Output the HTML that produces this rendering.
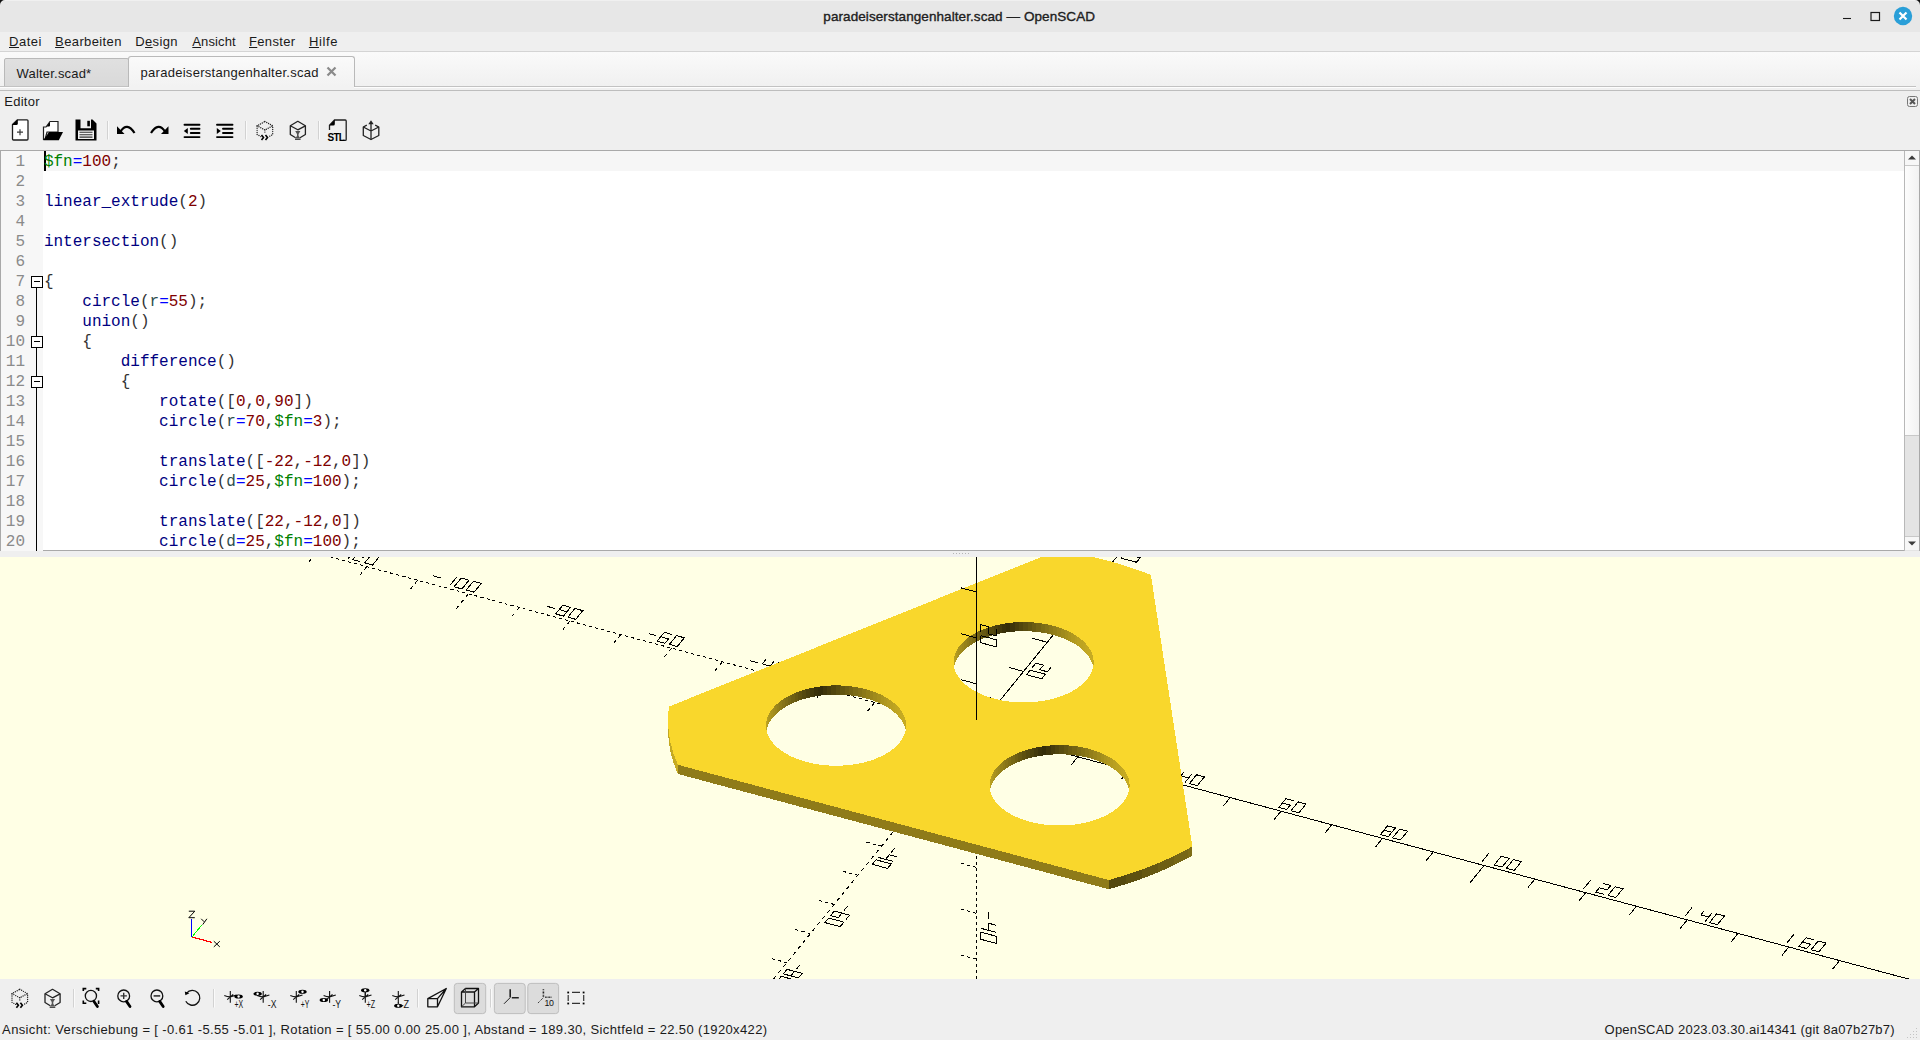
<!DOCTYPE html>
<html><head><meta charset="utf-8">
<style>
*{margin:0;padding:0;box-sizing:border-box}
html,body{width:1920px;height:1040px;overflow:hidden;background:#efefef;font-family:"Liberation Sans",sans-serif;color:#1a1a1a}
.a{position:absolute}
.ui{font-size:13px;letter-spacing:0.25px;white-space:pre;line-height:1}
#title{left:0;top:0;width:1920px;height:32px;background:#e7e7e7}
#menu{left:0;top:32px;width:1920px;height:20px;background:#efefef;border-bottom:1px solid #d4d4d4}
#tabs{left:0;top:52px;width:1920px;height:39px;background:#efefef}
#code{left:0;top:150px;width:1920px;height:401px;background:#fff;border:1px solid #a9a9a9}
.ln{font-family:"Liberation Mono",monospace;font-size:16px;white-space:pre;line-height:20px}
#vp{left:0;top:557px;width:1920px;height:422px;background:#ffffe5;overflow:hidden}
#status{left:0;top:1017px;width:1920px;height:23px;background:#efefef}
</style></head><body>
<style>.lnum{color:#8a8a8a}</style>
<div class="a" id="title"></div><div class="a" style="left:0;top:0;width:1920px;height:1px;background:#f0f0f0"></div>
<div class="a ui" style="left:823.3px;top:9.7px;font-size:13.5px;letter-spacing:0.081px;color:#202020;-webkit-text-stroke:0.35px #202020">paradeiserstangenhalter.scad — OpenSCAD</div>
<svg class="a" style="left:1835px;top:0" width="85" height="32"><path d="M8 18.5 H16" stroke="#1a1a1a" stroke-width="1.1"/><rect x="36" y="12.5" width="8.5" height="8" fill="none" stroke="#1a1a1a" stroke-width="1.2"/><circle cx="68" cy="16" r="9.2" fill="#2a9fd8"/><path d="M64.5 12.5 L71.5 19.5 M71.5 12.5 L64.5 19.5" stroke="#fff" stroke-width="2.2"/></svg>
<svg class="a" style="left:0;top:0" width="6" height="6"><path d="M0 0 H5 A5 5 0 0 0 0 5 Z" fill="#111"/></svg>
<svg class="a" style="left:1914px;top:0" width="6" height="6"><path d="M6 0 H1 A5 5 0 0 1 6 5 Z" fill="#111"/></svg>
<div class="a" id="menu"></div>
<div class="a ui" style="left:9px;top:34.6px;letter-spacing:0.535px"><u>D</u>atei</div>
<div class="a ui" style="left:55.1px;top:34.6px;letter-spacing:0.383px"><u>B</u>earbeiten</div>
<div class="a ui" style="left:135.3px;top:34.6px;letter-spacing:0.333px">D<u>e</u>sign</div>
<div class="a ui" style="left:192.3px;top:34.6px;letter-spacing:0.113px"><u>A</u>nsicht</div>
<div class="a ui" style="left:249px;top:34.6px;letter-spacing:0.326px"><u>F</u>enster</div>
<div class="a ui" style="left:308.9px;top:34.6px;letter-spacing:0.631px"><u>H</u>ilfe</div>
<div class="a" id="tabs" style="background:linear-gradient(#fafafa,#efefef)"></div>
<div class="a" style="left:4px;top:58px;width:125px;height:29px;background:linear-gradient(#e0e0e0,#d9d9d9);border:1px solid #b9b9b9;border-bottom:1px solid #b9b9b9;border-radius:2px 2px 0 0"></div>
<div class="a ui" style="left:16.6px;top:66.5px;letter-spacing:0.188px">Walter.scad*</div>
<div class="a" style="left:0;top:86px;width:1916px;height:4px;background:#f0f0f0;border-top:1px solid #c2c2c2;box-shadow:inset 0 1px 0 #fdfdfd"></div>
<div class="a" style="left:128px;top:56px;width:227px;height:31px;background:linear-gradient(#fafafa,#f2f2f2);border:1px solid #b9b9b9;border-bottom:none;border-radius:3px 3px 0 0"></div><div class="a" style="left:129px;top:86px;width:225px;height:4px;background:#f2f2f2"></div>
<div class="a ui" style="left:140.6px;top:65.5px;letter-spacing:0.273px">paradeiserstangenhalter.scad</div>
<svg class="a" style="left:325px;top:65px" width="14" height="14"><path d="M2.5 2.5 L10.5 10.5 M10.5 2.5 L2.5 10.5" stroke="#8a8a8a" stroke-width="2.2"/></svg>
<div class="a" style="left:0;top:90px;width:1920px;height:1px;background:#bdbdbd"></div>
<svg class="a" style="left:1906px;top:95px" width="13" height="13"><rect x="1.5" y="1.5" width="10" height="10" rx="2" fill="none" stroke="#777" stroke-width="1"/><path d="M4 4L9 9M9 4L4 9" stroke="#555" stroke-width="2"/></svg>
<div class="a ui" style="left:4.2px;top:94.8px;letter-spacing:0.274px">Editor</div>
<svg class="a" style="left:950px;top:551px" width="22" height="5"><g fill="#b4b4b4"><rect x="3" y="2" width="1" height="1"/><rect x="6" y="2" width="1" height="1"/><rect x="9" y="2" width="1" height="1"/><rect x="12" y="2" width="1" height="1"/><rect x="15" y="2" width="1" height="1"/><rect x="18" y="2" width="1" height="1"/></g></svg>
<svg class="a" style="left:0;top:110px" width="400" height="40" viewBox="0 110 400 40">
<g fill="none" stroke="#1e1e1e" stroke-width="1.3" stroke-linejoin="round">
 <path d="M12.5 124.5 L17.5 119.8 H27 Q28 119.8 28 120.8 V139 Q28 140 27 140 H13.5 Q12.5 140 12.5 139 Z" fill="#fff"/>
</g>
<path d="M12 125 L17.8 119.5 V123.5 Q17.8 125 16.3 125 Z" fill="#000"/>
<path d="M17 132.2 H23 M20 129.2 V135.2" stroke="#3a3a3a" stroke-width="1.2"/>
<g stroke="#1e1e1e" stroke-width="1.2" fill="#fff">
 <path d="M43.5 127 L46 127 L50 121.5 H58 V132 H47 L45 139.5 H43.5 Z"/>
</g>
<path d="M46.5 126.5 L50 122 V125.5 Q50 126.5 49 126.5Z" fill="#000"/>
<path d="M49 132 H63 L58.8 140.2 H43.3 Z" fill="#000"/>
<path d="M75.5 119.5 H80.5 V128.2 H91 V119.5 H92.5 L96.5 123.5 V140.5 H75.5 Z M78 130.5 V139 H94 V130.5 Z" fill="#000" fill-rule="evenodd"/>
<rect x="87.3" y="120.8" width="2.6" height="5.5" fill="#000"/>
<path d="M79.5 132.3 H92.5 M79.5 134.7 H92.5 M79.5 137.1 H92.5" stroke="#333" stroke-width="1.1"/>
<path d="M107.5 121 V139.5" stroke="#d2d2d2" stroke-width="1"/><path d="M108.5 121 V139.5" stroke="#fafafa" stroke-width="1"/>
<path d="M120.5 131.5 Q127 121.5 134.5 133" fill="none" stroke="#000" stroke-width="2.2"/>
<path d="M117 126.3 V134 H124.5 Z" fill="#000"/>
<path d="M165 131.5 Q158.5 121.5 151 133" fill="none" stroke="#000" stroke-width="2.2"/>
<path d="M168.5 126.3 V134 H161 Z" fill="#000"/>
<g stroke="#000" stroke-width="1.9" stroke-linecap="round">
 <path d="M184.5 124.7 H199.5 M190.8 128.8 H199.5 M190.8 133 H199.5 M184.5 137.1 H199.5"/>
 <path d="M217 124.7 H232.5 M223 128.8 H232.5 M223 133 H232.5 M217 137.1 H232.5"/>
</g>
<path d="M183.8 131 L187.8 128 V134 Z" fill="#000"/>
<path d="M220.8 131 L216.8 128 V134 Z" fill="#000"/>
<path d="M245.5 121 V139.5" stroke="#d2d2d2" stroke-width="1"/><path d="M246.5 121 V139.5" stroke="#fafafa" stroke-width="1"/>
<g fill="none" stroke="#222" stroke-width="1.4" stroke-dasharray="0 2.1" stroke-linecap="round">
 <path d="M264.9 121.5 L272.7 125.8 V134.5 L269 136.6 M260.8 136.6 L257.1 134.5 V125.8 L264.9 121.5"/>
 <path d="M257.1 125.8 L264.9 130 L272.7 125.8 M264.9 130 V134"/>
</g>
<path d="M261.5 135 L263.5 137.5 L261.5 140 M265.5 135 L267.5 137.5 L265.5 140" fill="none" stroke="#000" stroke-width="1.6"/>
<g fill="none" stroke="#222" stroke-width="1.3" stroke-linejoin="round">
 <path d="M300 137.7 L305.4 134.5 V125.8 L297.8 121.3 L290.3 125.8 V134.5 L295.6 137.7"/>
 <path d="M290.3 125.8 L297.8 129.8 L305.4 125.8"/>
</g>
<path d="M295.2 131 H300.4 L298.6 134 V136 L300.6 138.6 H295 L297 136 V134 Z" fill="#555"/>
<path d="M295 139.3 H300.6" stroke="#222" stroke-width="1"/>
<path d="M318.5 121 V139.5" stroke="#d2d2d2" stroke-width="1"/><path d="M319.5 121 V139.5" stroke="#fafafa" stroke-width="1"/>
<path d="M329.5 130 V125.3 L334.5 120 H345.3 Q346.2 120 346.2 121 V139.5 Q346.2 140.4 345.3 140.4 H343" fill="none" stroke="#222" stroke-width="1.3"/>
<path d="M329.3 125.5 L334.8 119.8 V124 Q334.8 125.5 333.3 125.5Z" fill="#000"/>
<rect x="327" y="131.5" width="16" height="9.5" fill="#efefef"/><text x="327.6" y="140.6" font-family="Liberation Sans" font-weight="bold" font-size="11" fill="#000" letter-spacing="-0.9" textLength="16.4" lengthAdjust="spacingAndGlyphs">STL</text>
<g fill="none" stroke="#222" stroke-width="1.3" stroke-linejoin="round">
 <path d="M366.8 125.1 L363.3 127 V135.5 L371 139.5 L378.8 135.5 V127 L375.2 125.1"/>
 <path d="M363.3 127 L371 131 L378.8 127 M371 131 V139.5 M371 131 V122.5"/>
</g>
<path d="M368.3 124.2 L371 120.3 L373.7 124.2Z" fill="#222"/>
</svg>
<div class="a" id="code"><div class="a" style="left:0;top:0;width:42px;height:400px;background:#f7f7f7"></div>
<div class="a" style="left:42px;top:0;width:1862px;height:20px;background:#f6f6f6"></div>
<div class="a" style="left:43px;top:0;width:2px;height:20px;background:#000"></div>
<div class="a ln" style="left:42.9px;top:1px"><span style="color:#007f00">$fn</span><span style="color:#0000ff">=</span><span style="color:#7f0000">100</span><span style="color:#333333">;</span></div>
<div class="a ln lnum" style="right:1894px;top:0.5px">1</div>
<div class="a ln" style="left:42.9px;top:21px"></div>
<div class="a ln lnum" style="right:1894px;top:20.5px">2</div>
<div class="a ln" style="left:42.9px;top:41px"><span style="color:#00007f">linear_extrude</span><span style="color:#333333">(</span><span style="color:#7f0000">2</span><span style="color:#333333">)</span></div>
<div class="a ln lnum" style="right:1894px;top:40.5px">3</div>
<div class="a ln" style="left:42.9px;top:61px"></div>
<div class="a ln lnum" style="right:1894px;top:60.5px">4</div>
<div class="a ln" style="left:42.9px;top:81px"><span style="color:#00007f">intersection</span><span style="color:#333333">()</span></div>
<div class="a ln lnum" style="right:1894px;top:80.5px">5</div>
<div class="a ln" style="left:42.9px;top:101px"></div>
<div class="a ln lnum" style="right:1894px;top:100.5px">6</div>
<div class="a ln" style="left:42.9px;top:121px"><span style="color:#333333">{</span></div>
<div class="a ln lnum" style="right:1894px;top:120.5px">7</div>
<div class="a ln" style="left:42.9px;top:141px">    <span style="color:#00007f">circle</span><span style="color:#333333">(</span><span style="color:#2f4f4f">r</span><span style="color:#0000ff">=</span><span style="color:#7f0000">55</span><span style="color:#333333">);</span></div>
<div class="a ln lnum" style="right:1894px;top:140.5px">8</div>
<div class="a ln" style="left:42.9px;top:161px">    <span style="color:#00007f">union</span><span style="color:#333333">()</span></div>
<div class="a ln lnum" style="right:1894px;top:160.5px">9</div>
<div class="a ln" style="left:42.9px;top:181px">    <span style="color:#333333">{</span></div>
<div class="a ln lnum" style="right:1894px;top:180.5px">10</div>
<div class="a ln" style="left:42.9px;top:201px">        <span style="color:#00007f">difference</span><span style="color:#333333">()</span></div>
<div class="a ln lnum" style="right:1894px;top:200.5px">11</div>
<div class="a ln" style="left:42.9px;top:221px">        <span style="color:#333333">{</span></div>
<div class="a ln lnum" style="right:1894px;top:220.5px">12</div>
<div class="a ln" style="left:42.9px;top:241px">            <span style="color:#00007f">rotate</span><span style="color:#333333">([</span><span style="color:#7f0000">0</span><span style="color:#333333">,</span><span style="color:#7f0000">0</span><span style="color:#333333">,</span><span style="color:#7f0000">90</span><span style="color:#333333">])</span></div>
<div class="a ln lnum" style="right:1894px;top:240.5px">13</div>
<div class="a ln" style="left:42.9px;top:261px">            <span style="color:#00007f">circle</span><span style="color:#333333">(</span><span style="color:#2f4f4f">r</span><span style="color:#0000ff">=</span><span style="color:#7f0000">70</span><span style="color:#333333">,</span><span style="color:#007f00">$fn</span><span style="color:#0000ff">=</span><span style="color:#7f0000">3</span><span style="color:#333333">);</span></div>
<div class="a ln lnum" style="right:1894px;top:260.5px">14</div>
<div class="a ln" style="left:42.9px;top:281px"></div>
<div class="a ln lnum" style="right:1894px;top:280.5px">15</div>
<div class="a ln" style="left:42.9px;top:301px">            <span style="color:#00007f">translate</span><span style="color:#333333">([</span><span style="color:#7f0000">-22</span><span style="color:#333333">,</span><span style="color:#7f0000">-12</span><span style="color:#333333">,</span><span style="color:#7f0000">0</span><span style="color:#333333">])</span></div>
<div class="a ln lnum" style="right:1894px;top:300.5px">16</div>
<div class="a ln" style="left:42.9px;top:321px">            <span style="color:#00007f">circle</span><span style="color:#333333">(</span><span style="color:#2f4f4f">d</span><span style="color:#0000ff">=</span><span style="color:#7f0000">25</span><span style="color:#333333">,</span><span style="color:#007f00">$fn</span><span style="color:#0000ff">=</span><span style="color:#7f0000">100</span><span style="color:#333333">);</span></div>
<div class="a ln lnum" style="right:1894px;top:320.5px">17</div>
<div class="a ln" style="left:42.9px;top:341px"></div>
<div class="a ln lnum" style="right:1894px;top:340.5px">18</div>
<div class="a ln" style="left:42.9px;top:361px">            <span style="color:#00007f">translate</span><span style="color:#333333">([</span><span style="color:#7f0000">22</span><span style="color:#333333">,</span><span style="color:#7f0000">-12</span><span style="color:#333333">,</span><span style="color:#7f0000">0</span><span style="color:#333333">])</span></div>
<div class="a ln lnum" style="right:1894px;top:360.5px">19</div>
<div class="a ln" style="left:42.9px;top:381px">            <span style="color:#00007f">circle</span><span style="color:#333333">(</span><span style="color:#2f4f4f">d</span><span style="color:#0000ff">=</span><span style="color:#7f0000">25</span><span style="color:#333333">,</span><span style="color:#007f00">$fn</span><span style="color:#0000ff">=</span><span style="color:#7f0000">100</span><span style="color:#333333">);</span></div>
<div class="a ln lnum" style="right:1894px;top:380.5px">20</div><div class="a" style="left:35px;top:137px;width:1px;height:263px;background:#000"></div>
<div class="a" style="left:30px;top:125px;width:12px;height:12px;border:1px solid #000;background:#fff"><div class="a" style="left:2px;top:4px;width:6px;height:1px;background:#000"></div></div>
<div class="a" style="left:30px;top:185px;width:12px;height:12px;border:1px solid #000;background:#fff"><div class="a" style="left:2px;top:4px;width:6px;height:1px;background:#000"></div></div>
<div class="a" style="left:30px;top:225px;width:12px;height:12px;border:1px solid #000;background:#fff"><div class="a" style="left:2px;top:4px;width:6px;height:1px;background:#000"></div></div>
<div class="a" style="left:1903px;top:0;width:15px;height:400px;background:#e4e4e4;border-left:1px solid #b8b8b8"></div>
<div class="a" style="left:1904px;top:14px;width:14px;height:271px;background:linear-gradient(90deg,#fdfdfd,#f2f2f2);border-top:1px solid #c8c8c8;border-bottom:1px solid #c8c8c8"></div>
<div class="a" style="left:1904px;top:0;width:14px;height:14px;background:#f7f7f7"></div>
<div class="a" style="left:1904px;top:385px;width:14px;height:14px;background:#f7f7f7;border-top:1px solid #c8c8c8"></div>
<svg class="a" style="left:1904px;top:0" width="14" height="400"><path d="M3 8.5 L7 4.5 L11 8.5Z" fill="#3c3c3c"/><path d="M3 390.5 L7 394.5 L11 390.5Z" fill="#3c3c3c"/></svg>
</div><svg class="a" style="left:0;top:557px" width="1920" height="422" viewBox="0 0 1920 422">
<rect width="1920" height="422" fill="#ffffe5"/>
<g stroke="#000" stroke-width="1" fill="none" shape-rendering="crispEdges">
<line x1="976.24" y1="172.66" x2="1937.62" y2="429.80"/>
<line x1="976.24" y1="172.66" x2="1424.54" y2="-378.76"/>
<line x1="976.24" y1="172.66" x2="14.86" y2="-84.47" stroke-dasharray="3.11 3.11"/>
<line x1="976.24" y1="172.66" x2="527.94" y2="724.09" stroke-dasharray="3.87 3.87"/>
<line x1="976.24" y1="172.66" x2="976.24" y2="1041.60" stroke-dasharray="3.00 3.00"/>
<line x1="1027.03" y1="186.25" x2="1020.02" y2="194.86"/>
<line x1="999.92" y1="143.53" x2="984.90" y2="139.52"/>
<line x1="925.46" y1="159.08" x2="918.45" y2="167.70" stroke-dasharray="3.87 3.87"/>
<line x1="952.56" y1="201.79" x2="937.54" y2="197.78" stroke-dasharray="3.11 3.11"/>
<line x1="976.24" y1="218.57" x2="961.22" y2="214.55" stroke-dasharray="3.11 3.11"/>
<line x1="1077.81" y1="199.83" x2="1070.81" y2="208.45"/>
<line x1="1023.61" y1="114.40" x2="1008.58" y2="110.39"/>
<polyline points="1083.55,198.17 1075.68,196.07 1079.23,191.70 1087.10,193.80 1090.66,189.44 1082.78,187.33"/>
<polyline points="1087.87,199.33 1095.74,201.43 1102.84,192.70 1094.97,190.59 1087.87,199.33"/>
<polyline points="1032.18,110.70 1035.85,106.19 1043.47,108.23 1039.80,112.74 1047.41,114.78 1051.09,110.26"/>
<polyline points="1030.17,113.18 1026.49,117.70 1041.73,121.77 1045.40,117.26 1030.17,113.18"/>
<line x1="874.67" y1="145.50" x2="867.66" y2="154.11" stroke-dasharray="3.87 3.87"/>
<line x1="928.88" y1="230.92" x2="913.86" y2="226.91" stroke-dasharray="3.11 3.11"/>
<line x1="976.24" y1="264.47" x2="961.22" y2="260.45" stroke-dasharray="3.11 3.11"/>
<polyline points="851.71,130.85 859.58,132.95"/>
<polyline points="868.22,140.58 860.35,138.47 863.90,134.11 871.77,136.21 875.32,131.84 867.45,129.74"/>
<polyline points="872.53,141.73 880.41,143.84 887.51,135.10 879.64,133.00 872.53,141.73"/>
<polyline points="942.34,232.61 938.67,237.13"/>
<polyline points="925.37,242.08 929.04,237.56 936.66,239.60 932.99,244.12 940.61,246.15 944.28,241.64"/>
<polyline points="923.36,244.56 919.69,249.07 934.92,253.15 938.60,248.63 923.36,244.56"/>
<polyline points="988.43,263.37 988.43,270.48"/>
<polyline points="980.81,279.46 980.81,272.35 988.43,274.38 988.43,281.50 996.05,283.54 996.05,276.42"/>
<polyline points="980.81,283.36 980.81,290.48 996.05,294.55 996.05,287.44 980.81,283.36"/>
<line x1="1128.60" y1="213.41" x2="1121.60" y2="222.03"/>
<line x1="1047.29" y1="85.28" x2="1032.27" y2="81.26"/>
<line x1="823.88" y1="131.91" x2="816.88" y2="140.53" stroke-dasharray="3.87 3.87"/>
<line x1="905.20" y1="260.05" x2="890.17" y2="256.04" stroke-dasharray="3.11 3.11"/>
<line x1="976.24" y1="310.37" x2="961.22" y2="306.35" stroke-dasharray="3.11 3.11"/>
<line x1="1179.39" y1="227.00" x2="1172.38" y2="235.61"/>
<line x1="1070.97" y1="56.15" x2="1055.95" y2="52.13"/>
<polyline points="1184.36,214.50 1180.80,218.87 1188.68,220.97"/>
<polyline points="1192.23,216.60 1185.12,225.34"/>
<polyline points="1189.44,226.50 1197.31,228.60 1204.42,219.86 1196.54,217.76 1189.44,226.50"/>
<polyline points="1098.45,52.00 1090.83,49.97 1087.16,54.48"/>
<polyline points="1094.78,56.52 1079.54,52.45"/>
<polyline points="1077.53,54.92 1073.86,59.44 1089.09,63.51 1092.77,59.00 1077.53,54.92"/>
<line x1="773.10" y1="118.33" x2="766.09" y2="126.95" stroke-dasharray="3.87 3.87"/>
<line x1="881.51" y1="289.18" x2="866.49" y2="285.17" stroke-dasharray="3.11 3.11"/>
<line x1="976.24" y1="356.27" x2="961.22" y2="352.26" stroke-dasharray="3.11 3.11"/>
<polyline points="750.14,103.68 758.01,105.78"/>
<polyline points="765.88,102.57 762.33,106.94 770.20,109.04"/>
<polyline points="773.75,104.67 766.65,113.41"/>
<polyline points="770.96,114.57 778.83,116.67 785.94,107.93 778.07,105.83 770.96,114.57"/>
<polyline points="894.98,290.87 891.31,295.39"/>
<polyline points="896.92,299.90 889.30,297.86 885.63,302.38"/>
<polyline points="893.24,304.41 878.01,300.34"/>
<polyline points="876.00,302.82 872.32,307.33 887.56,311.41 891.23,306.89 876.00,302.82"/>
<polyline points="988.43,355.17 988.43,362.29"/>
<polyline points="996.05,368.23 988.43,366.19 988.43,373.30"/>
<polyline points="996.05,375.34 980.81,371.27"/>
<polyline points="980.81,375.17 980.81,382.28 996.05,386.36 996.05,379.24 980.81,375.17"/>
<line x1="1230.17" y1="240.58" x2="1223.17" y2="249.20"/>
<line x1="1094.65" y1="27.02" x2="1079.63" y2="23.00"/>
<line x1="722.31" y1="104.75" x2="715.31" y2="113.36" stroke-dasharray="3.87 3.87"/>
<line x1="857.83" y1="318.31" x2="842.81" y2="314.30" stroke-dasharray="3.11 3.11"/>
<line x1="976.24" y1="402.18" x2="961.22" y2="398.16" stroke-dasharray="3.11 3.11"/>
<line x1="1280.96" y1="254.17" x2="1273.95" y2="262.78"/>
<line x1="1118.33" y1="-2.11" x2="1103.31" y2="-6.13"/>
<polyline points="1293.80,243.77 1285.93,241.66 1278.82,250.40 1286.70,252.51 1290.25,248.14 1282.38,246.03"/>
<polyline points="1291.01,253.66 1298.88,255.77 1305.99,247.03 1298.12,244.92 1291.01,253.66"/>
<polyline points="1142.14,-1.74 1145.81,-6.25 1130.58,-10.33 1126.91,-5.81 1134.52,-3.78 1138.20,-8.29"/>
<polyline points="1124.89,-3.34 1121.22,1.18 1136.46,5.25 1140.13,0.74 1124.89,-3.34"/>
<line x1="671.52" y1="91.16" x2="664.52" y2="99.78" stroke-dasharray="3.87 3.87"/>
<line x1="834.15" y1="347.44" x2="819.13" y2="343.43" stroke-dasharray="3.11 3.11"/>
<line x1="976.24" y1="448.08" x2="961.22" y2="444.06" stroke-dasharray="3.11 3.11"/>
<polyline points="648.56,76.51 656.44,78.62"/>
<polyline points="672.18,77.51 664.31,75.40 657.20,84.14 665.07,86.25 668.63,81.88 660.75,79.77"/>
<polyline points="669.39,87.40 677.26,89.51 684.37,80.77 676.49,78.66 669.39,87.40"/>
<polyline points="847.62,349.13 843.95,353.65"/>
<polyline points="845.88,362.67 849.55,358.16 834.32,354.08 830.64,358.60 838.26,360.64 841.93,356.12"/>
<polyline points="828.63,361.07 824.96,365.59 840.20,369.67 843.87,365.15 828.63,361.07"/>
<polyline points="988.43,446.98 988.43,454.09"/>
<polyline points="996.05,467.15 996.05,460.03 980.81,455.96 980.81,463.07 988.43,465.11 988.43,457.99"/>
<polyline points="980.81,466.97 980.81,474.09 996.05,478.16 996.05,471.05 980.81,466.97"/>
<line x1="1331.74" y1="267.75" x2="1324.74" y2="276.36"/>
<line x1="1142.02" y1="-31.24" x2="1126.99" y2="-35.26"/>
<line x1="620.74" y1="77.58" x2="613.73" y2="86.20" stroke-dasharray="3.87 3.87"/>
<line x1="810.47" y1="376.57" x2="795.45" y2="372.56" stroke-dasharray="3.11 3.11"/>
<line x1="976.24" y1="493.98" x2="961.22" y2="489.96" stroke-dasharray="3.11 3.11"/>
<line x1="1382.53" y1="281.33" x2="1375.53" y2="289.95"/>
<line x1="1165.70" y1="-60.37" x2="1150.68" y2="-64.39"/>
<polyline points="1380.40,277.57 1388.27,279.67 1395.37,270.94 1387.50,268.83 1380.40,277.57"/>
<polyline points="1383.95,273.20 1391.82,275.31"/>
<polyline points="1392.59,280.83 1400.46,282.93 1407.56,274.20 1399.69,272.09 1392.59,280.83"/>
<polyline points="1177.94,-68.59 1174.27,-64.07 1189.51,-60.00 1193.18,-64.51 1177.94,-68.59"/>
<polyline points="1185.56,-66.55 1181.89,-62.04"/>
<polyline points="1172.26,-61.60 1168.59,-57.08 1183.82,-53.01 1187.49,-57.52 1172.26,-61.60"/>
<line x1="569.95" y1="64.00" x2="562.95" y2="72.61" stroke-dasharray="3.87 3.87"/>
<line x1="786.79" y1="405.70" x2="771.76" y2="401.68" stroke-dasharray="3.11 3.11"/>
<line x1="976.24" y1="539.88" x2="961.22" y2="535.87" stroke-dasharray="3.11 3.11"/>
<polyline points="546.99,49.34 554.86,51.45"/>
<polyline points="555.63,56.97 563.50,59.08 570.60,50.34 562.73,48.24 555.63,56.97"/>
<polyline points="559.18,52.60 567.05,54.71"/>
<polyline points="567.82,60.23 575.69,62.34 582.79,53.60 574.92,51.50 567.82,60.23"/>
<polyline points="800.25,407.39 796.58,411.90"/>
<polyline points="786.95,412.34 783.28,416.86 798.52,420.93 802.19,416.42 786.95,412.34"/>
<polyline points="794.57,414.38 790.90,418.90"/>
<polyline points="781.27,419.33 777.60,423.85 792.83,427.92 796.50,423.41 781.27,419.33"/>
<polyline points="988.43,538.78 988.43,545.90"/>
<polyline points="980.81,547.76 980.81,554.88 996.05,558.95 996.05,551.84 980.81,547.76"/>
<polyline points="988.43,549.80 988.43,556.91"/>
<polyline points="980.81,558.78 980.81,565.89 996.05,569.97 996.05,562.85 980.81,558.78"/>
<line x1="1433.32" y1="294.92" x2="1426.31" y2="303.53"/>
<line x1="1189.38" y1="-89.50" x2="1174.36" y2="-93.52"/>
<line x1="519.17" y1="50.41" x2="512.16" y2="59.03" stroke-dasharray="3.87 3.87"/>
<line x1="763.10" y1="434.83" x2="748.08" y2="430.81" stroke-dasharray="3.11 3.11"/>
<line x1="976.24" y1="585.79" x2="961.22" y2="581.77" stroke-dasharray="3.11 3.11"/>
<line x1="1484.10" y1="308.50" x2="1470.09" y2="325.73"/>
<line x1="1213.06" y1="-118.63" x2="1183.02" y2="-126.67"/>
<polyline points="1481.97,304.74 1489.07,296.00"/>
<polyline points="1494.16,308.00 1502.03,310.10 1509.13,301.36 1501.26,299.26 1494.16,308.00"/>
<polyline points="1506.35,311.26 1514.22,313.36 1521.32,304.62 1513.45,302.52 1506.35,311.26"/>
<polyline points="1230.99,-133.84 1246.22,-129.76"/>
<polyline points="1225.31,-126.85 1221.63,-122.33 1236.87,-118.26 1240.54,-122.77 1225.31,-126.85"/>
<polyline points="1219.62,-119.86 1215.95,-115.34 1231.19,-111.27 1234.86,-115.78 1219.62,-119.86"/>
<line x1="468.38" y1="36.83" x2="454.37" y2="54.06" stroke-dasharray="3.87 3.87"/>
<line x1="739.42" y1="463.96" x2="709.38" y2="455.93" stroke-dasharray="3.11 3.11"/>
<line x1="976.24" y1="631.69" x2="946.20" y2="623.65" stroke-dasharray="3.11 3.11"/>
<polyline points="433.23,18.92 441.10,21.02"/>
<polyline points="449.74,28.65 456.84,19.91"/>
<polyline points="454.06,29.81 461.93,31.91 469.03,23.17 461.16,21.07 454.06,29.81"/>
<polyline points="466.24,33.07 474.12,35.17 481.22,26.43 473.35,24.33 466.24,33.07"/>
<polyline points="758.57,458.66 754.90,463.17"/>
<polyline points="741.60,468.13 756.84,472.20"/>
<polyline points="739.59,470.60 735.92,475.12 751.15,479.19 754.82,474.68 739.59,470.60"/>
<polyline points="733.90,477.59 730.23,482.11 745.47,486.18 749.14,481.67 733.90,477.59"/>
<polyline points="988.43,630.59 988.43,637.70"/>
<polyline points="980.81,646.68 996.05,650.76"/>
<polyline points="980.81,650.58 980.81,657.70 996.05,661.77 996.05,654.66 980.81,650.58"/>
<polyline points="980.81,661.60 980.81,668.71 996.05,672.79 996.05,665.67 980.81,661.60"/>
<line x1="1534.89" y1="322.08" x2="1527.89" y2="330.70"/>
<line x1="1236.74" y1="-147.76" x2="1221.72" y2="-151.78"/>
<line x1="417.59" y1="23.25" x2="410.59" y2="31.86" stroke-dasharray="3.87 3.87"/>
<line x1="715.74" y1="493.09" x2="700.72" y2="489.07" stroke-dasharray="3.11 3.11"/>
<line x1="976.24" y1="677.59" x2="961.22" y2="673.57" stroke-dasharray="3.11 3.11"/>
<line x1="1585.68" y1="335.67" x2="1578.67" y2="344.28"/>
<line x1="1260.43" y1="-176.89" x2="1245.40" y2="-180.91"/>
<polyline points="1583.54,331.90 1590.65,323.16"/>
<polyline points="1603.60,337.27 1595.73,335.16 1599.28,330.79 1607.15,332.90 1610.71,328.53 1602.83,326.42"/>
<polyline points="1607.92,338.42 1615.79,340.53 1622.90,331.79 1615.02,329.68 1607.92,338.42"/>
<polyline points="1278.35,-192.10 1293.59,-188.02"/>
<polyline points="1269.00,-180.59 1272.67,-185.11 1280.29,-183.07 1276.62,-178.56 1284.23,-176.52 1287.91,-181.03"/>
<polyline points="1266.99,-178.12 1263.31,-173.60 1278.55,-169.53 1282.22,-174.04 1266.99,-178.12"/>
<line x1="366.81" y1="9.66" x2="359.80" y2="18.28" stroke-dasharray="3.87 3.87"/>
<line x1="692.06" y1="522.22" x2="677.04" y2="518.20" stroke-dasharray="3.11 3.11"/>
<line x1="976.24" y1="723.49" x2="961.22" y2="719.47" stroke-dasharray="3.11 3.11"/>
<polyline points="331.66,-8.25 339.53,-6.14"/>
<polyline points="348.17,1.49 355.27,-7.25"/>
<polyline points="360.36,4.75 352.48,2.64 356.04,-1.73 363.91,0.38 367.46,-3.99 359.59,-6.10"/>
<polyline points="364.67,5.90 372.54,8.01 379.65,-0.73 371.78,-2.84 364.67,5.90"/>
<polyline points="711.21,516.92 707.54,521.43"/>
<polyline points="694.24,526.39 709.47,530.46"/>
<polyline points="688.55,533.38 692.22,528.86 699.84,530.90 696.17,535.42 703.79,537.45 707.46,532.94"/>
<polyline points="686.54,535.85 682.87,540.37 698.10,544.44 701.78,539.93 686.54,535.85"/>
<polyline points="988.43,722.39 988.43,729.51"/>
<polyline points="980.81,738.49 996.05,742.56"/>
<polyline points="980.81,749.50 980.81,742.39 988.43,744.42 988.43,751.54 996.05,753.58 996.05,746.46"/>
<polyline points="980.81,753.40 980.81,760.52 996.05,764.59 996.05,757.48 980.81,753.40"/>
<line x1="1636.46" y1="349.25" x2="1629.46" y2="357.87"/>
<line x1="1284.11" y1="-206.02" x2="1269.09" y2="-210.04"/>
<line x1="316.02" y1="-3.92" x2="309.02" y2="4.70" stroke-dasharray="3.87 3.87"/>
<line x1="668.38" y1="551.35" x2="653.35" y2="547.33" stroke-dasharray="3.11 3.11"/>
<line x1="976.24" y1="769.39" x2="961.22" y2="765.38" stroke-dasharray="3.11 3.11"/>
<line x1="1687.25" y1="362.83" x2="1680.24" y2="371.45"/>
<line x1="1307.79" y1="-235.15" x2="1292.77" y2="-239.17"/>
<polyline points="1685.11,359.07 1692.22,350.33"/>
<polyline points="1704.41,353.59 1700.85,357.96 1708.73,360.07"/>
<polyline points="1712.28,355.70 1705.17,364.44"/>
<polyline points="1709.49,365.59 1717.36,367.70 1724.47,358.96 1716.60,356.85 1709.49,365.59"/>
<polyline points="1325.72,-250.36 1340.95,-246.28"/>
<polyline points="1335.27,-239.29 1327.65,-241.33 1323.98,-236.82"/>
<polyline points="1331.60,-234.78 1316.36,-238.85"/>
<polyline points="1314.35,-236.38 1310.68,-231.86 1325.91,-227.79 1329.59,-232.30 1314.35,-236.38"/>
<line x1="265.23" y1="-17.50" x2="258.23" y2="-8.89" stroke-dasharray="3.87 3.87"/>
<line x1="644.69" y1="580.48" x2="629.67" y2="576.46" stroke-dasharray="3.11 3.11"/>
<line x1="976.24" y1="815.30" x2="961.22" y2="811.28" stroke-dasharray="3.11 3.11"/>
<polyline points="230.09,-35.42 237.96,-33.31"/>
<polyline points="246.59,-25.68 253.70,-34.42"/>
<polyline points="258.02,-33.27 254.46,-28.90 262.34,-26.79"/>
<polyline points="265.89,-31.16 258.78,-22.42"/>
<polyline points="263.10,-21.27 270.97,-19.16 278.08,-27.90 270.20,-30.01 263.10,-21.27"/>
<polyline points="663.84,575.18 660.17,579.69"/>
<polyline points="646.87,584.65 662.11,588.72"/>
<polyline points="660.10,591.20 652.48,589.16 648.81,593.67"/>
<polyline points="656.42,595.71 641.19,591.64"/>
<polyline points="639.18,594.11 635.51,598.63 650.74,602.70 654.41,598.19 639.18,594.11"/>
<polyline points="988.43,814.20 988.43,821.31"/>
<polyline points="980.81,830.29 996.05,834.37"/>
<polyline points="996.05,838.27 988.43,836.23 988.43,843.34"/>
<polyline points="996.05,845.38 980.81,841.31"/>
<polyline points="980.81,845.21 980.81,852.32 996.05,856.40 996.05,849.28 980.81,845.21"/>
<line x1="1738.03" y1="376.42" x2="1731.03" y2="385.03"/>
<line x1="1331.47" y1="-264.28" x2="1316.45" y2="-268.30"/>
<line x1="214.45" y1="-31.09" x2="207.44" y2="-22.47" stroke-dasharray="3.87 3.87"/>
<line x1="621.01" y1="609.61" x2="605.99" y2="605.59" stroke-dasharray="3.11 3.11"/>
<line x1="976.24" y1="861.20" x2="961.22" y2="857.18" stroke-dasharray="3.11 3.11"/>
<line x1="1788.82" y1="390.00" x2="1781.82" y2="398.62"/>
<line x1="1355.15" y1="-293.41" x2="1340.13" y2="-297.43"/>
<polyline points="1786.69,386.24 1793.79,377.50"/>
<polyline points="1813.85,382.86 1805.98,380.76 1798.87,389.50 1806.75,391.60 1810.30,387.23 1802.43,385.13"/>
<polyline points="1811.06,392.76 1818.94,394.86 1826.04,386.12 1818.17,384.02 1811.06,392.76"/>
<polyline points="1373.08,-308.62 1388.32,-304.54"/>
<polyline points="1378.96,-293.04 1382.63,-297.55 1367.40,-301.63 1363.73,-297.11 1371.34,-295.07 1375.02,-299.59"/>
<polyline points="1361.71,-294.64 1358.04,-290.12 1373.28,-286.05 1376.95,-290.56 1361.71,-294.64"/>
<line x1="163.66" y1="-44.67" x2="156.66" y2="-36.05" stroke-dasharray="3.87 3.87"/>
<line x1="597.33" y1="638.74" x2="582.31" y2="634.72" stroke-dasharray="3.11 3.11"/>
<line x1="976.24" y1="907.10" x2="961.22" y2="903.08" stroke-dasharray="3.11 3.11"/>
<polyline points="128.51,-62.58 136.39,-60.48"/>
<polyline points="145.02,-52.85 152.13,-61.59"/>
<polyline points="164.32,-58.33 156.44,-60.43 149.34,-51.69 157.21,-49.59 160.76,-53.96 152.89,-56.06"/>
<polyline points="161.53,-48.43 169.40,-46.33 176.50,-55.07 168.63,-57.17 161.53,-48.43"/>
<polyline points="616.48,633.44 612.81,637.95"/>
<polyline points="599.51,642.91 614.74,646.98"/>
<polyline points="609.06,653.97 612.73,649.46 597.50,645.38 593.82,649.90 601.44,651.93 605.11,647.42"/>
<polyline points="591.81,652.37 588.14,656.89 603.38,660.96 607.05,656.45 591.81,652.37"/>
<polyline points="988.43,906.00 988.43,913.12"/>
<polyline points="980.81,922.09 996.05,926.17"/>
<polyline points="996.05,937.19 996.05,930.07 980.81,926.00 980.81,933.11 988.43,935.15 988.43,928.03"/>
<polyline points="980.81,937.01 980.81,944.13 996.05,948.20 996.05,941.09 980.81,937.01"/>
<line x1="1839.61" y1="403.58" x2="1832.60" y2="412.20"/>
<line x1="1378.84" y1="-322.54" x2="1363.81" y2="-326.56"/>
<line x1="112.88" y1="-58.25" x2="105.87" y2="-49.64" stroke-dasharray="3.87 3.87"/>
<line x1="573.65" y1="667.87" x2="558.63" y2="663.85" stroke-dasharray="3.11 3.11"/>
<line x1="976.24" y1="953.00" x2="961.22" y2="948.99" stroke-dasharray="3.11 3.11"/>
</g>
<g shape-rendering="crispEdges">
<polygon points="668.04,164.10 668.72,175.20 668.72,184.38 668.04,173.28" fill="#c3a822"/>
<polygon points="668.72,175.20 670.61,186.25 670.61,195.43 668.72,184.38" fill="#c4aa23"/>
<polygon points="670.61,186.25 673.70,197.21 673.70,206.40 670.61,195.43" fill="#c5aa23"/>
<polygon points="673.70,197.21 677.90,207.81 677.90,216.99 673.70,206.40" fill="#c6ab23"/>
<polygon points="677.90,207.81 1108.81,323.06 1108.81,332.24 677.90,216.99" fill="#8f7b19"/>
<polygon points="1108.81,323.06 1125.66,318.10 1125.66,327.28 1108.81,332.24" fill="#54490f"/>
<polygon points="1125.66,318.10 1142.29,312.41 1142.29,321.59 1125.66,327.28" fill="#5d5010"/>
<polygon points="1142.29,312.41 1158.27,306.14 1158.27,315.32 1142.29,321.59" fill="#665812"/>
<polygon points="1158.27,306.14 1173.52,299.30 1173.52,308.48 1158.27,315.32" fill="#6e5f14"/>
<polygon points="1173.52,299.30 1188.00,291.93 1188.00,301.11 1173.52,308.48" fill="#776715"/>
<polygon points="1188.00,291.93 1192.33,289.43 1192.33,298.61 1188.00,301.11" fill="#7f6e16"/>
<polygon points="766.05,168.70 766.17,166.17 766.17,175.35 766.05,177.88" fill="#c1a622"/>
<polygon points="766.17,166.17 766.57,163.66 766.57,172.84 766.17,175.35" fill="#bea422"/>
<polygon points="766.57,163.66 767.24,161.17 767.24,170.35 766.57,172.84" fill="#baa121"/>
<polygon points="767.24,161.17 768.19,158.70 768.19,167.88 767.24,170.35" fill="#b79e20"/>
<polygon points="768.19,158.70 769.40,156.27 769.40,165.45 768.19,167.88" fill="#b29a1f"/>
<polygon points="769.40,156.27 770.88,153.90 770.88,163.08 769.40,165.45" fill="#ad961f"/>
<polygon points="770.88,153.90 772.61,151.58 772.61,160.76 770.88,163.08" fill="#a8911e"/>
<polygon points="772.61,151.58 774.59,149.32 774.59,158.50 772.61,160.76" fill="#a28c1d"/>
<polygon points="774.59,149.32 776.82,147.15 776.82,156.33 774.59,158.50" fill="#9c871c"/>
<polygon points="776.82,147.15 779.28,145.05 779.28,154.24 776.82,156.33" fill="#95811a"/>
<polygon points="779.28,145.05 781.97,143.06 781.97,152.24 779.28,154.24" fill="#8e7b19"/>
<polygon points="781.97,143.06 784.87,141.16 784.87,150.34 781.97,152.24" fill="#877418"/>
<polygon points="784.87,141.16 787.97,139.37 787.97,148.55 784.87,150.34" fill="#7f6e16"/>
<polygon points="787.97,139.37 791.26,137.69 791.26,146.87 787.97,148.55" fill="#776715"/>
<polygon points="791.26,137.69 794.72,136.14 794.72,145.32 791.26,146.87" fill="#6e5f14"/>
<polygon points="794.72,136.14 798.35,134.71 798.35,143.89 794.72,145.32" fill="#665812"/>
<polygon points="798.35,134.71 802.13,133.42 802.13,142.60 798.35,143.89" fill="#5d5010"/>
<polygon points="802.13,133.42 806.05,132.26 806.05,141.44 802.13,142.60" fill="#54490f"/>
<polygon points="806.05,132.26 810.08,131.25 810.08,140.43 806.05,141.44" fill="#4b410d"/>
<polygon points="810.08,131.25 814.22,130.39 814.22,139.57 810.08,140.43" fill="#42390c"/>
<polygon points="814.22,130.39 818.44,129.68 818.44,138.86 814.22,139.57" fill="#39310a"/>
<polygon points="818.44,129.68 822.73,129.12 822.73,138.30 818.44,138.86" fill="#342d09"/>
<polygon points="822.73,129.12 827.07,128.71 827.07,137.89 822.73,138.30" fill="#3e350b"/>
<polygon points="827.07,128.71 831.45,128.47 831.45,137.65 827.07,137.89" fill="#473d0d"/>
<polygon points="831.45,128.47 835.85,128.38 835.85,137.56 831.45,137.65" fill="#50450e"/>
<polygon points="835.85,128.38 840.25,128.45 840.25,137.63 835.85,137.56" fill="#594d10"/>
<polygon points="840.25,128.45 844.63,128.68 844.63,137.86 840.25,137.63" fill="#625511"/>
<polygon points="844.63,128.68 848.98,129.07 848.98,138.25 844.63,137.86" fill="#6b5c13"/>
<polygon points="848.98,129.07 853.28,129.61 853.28,138.79 848.98,138.25" fill="#736314"/>
<polygon points="853.28,129.61 857.51,130.30 857.51,139.48 853.28,138.79" fill="#7b6b16"/>
<polygon points="857.51,130.30 861.65,131.15 861.65,140.33 857.51,139.48" fill="#837117"/>
<polygon points="861.65,131.15 865.70,132.14 865.70,141.32 861.65,140.33" fill="#8b7819"/>
<polygon points="865.70,132.14 869.62,133.28 869.62,142.46 865.70,141.32" fill="#927e1a"/>
<polygon points="869.62,133.28 873.42,134.56 873.42,143.74 869.62,142.46" fill="#99841b"/>
<polygon points="873.42,134.56 877.07,135.97 877.07,145.15 873.42,143.74" fill="#9f8a1c"/>
<polygon points="877.07,135.97 880.55,137.51 880.55,146.69 877.07,145.15" fill="#a58f1d"/>
<polygon points="880.55,137.51 883.86,139.17 883.86,148.35 880.55,146.69" fill="#ab941e"/>
<polygon points="883.86,139.17 886.99,140.95 886.99,150.13 883.86,148.35" fill="#b0981f"/>
<polygon points="886.99,140.95 889.91,142.84 889.91,152.02 886.99,150.13" fill="#b59c20"/>
<polygon points="889.91,142.84 892.62,144.83 892.62,154.01 889.91,152.02" fill="#b9a021"/>
<polygon points="892.62,144.83 895.10,146.91 895.10,156.09 892.62,154.01" fill="#bca321"/>
<polygon points="895.10,146.91 897.36,149.08 897.36,158.26 895.10,156.09" fill="#bfa522"/>
<polygon points="897.36,149.08 899.37,151.32 899.37,160.50 897.36,158.26" fill="#c2a722"/>
<polygon points="899.37,151.32 901.13,153.64 901.13,162.82 899.37,160.50" fill="#c4a923"/>
<polygon points="901.13,153.64 902.63,156.01 902.63,165.19 901.13,162.82" fill="#c5aa23"/>
<polygon points="902.63,156.01 903.88,158.43 903.88,167.61 902.63,165.19" fill="#c6ab23"/>
<polygon points="903.88,158.43 904.85,160.89 904.85,170.07 903.88,167.61" fill="#c6ab23"/>
<polygon points="904.85,160.89 905.56,163.38 905.56,172.56 904.85,170.07" fill="#c5aa23"/>
<polygon points="905.56,163.38 905.98,165.89 905.98,175.07 905.56,172.56" fill="#c4aa23"/>
<polygon points="905.98,165.89 906.14,168.42 906.14,177.60 905.98,175.07" fill="#c3a822"/>
<polygon points="989.51,228.46 989.63,225.94 989.63,235.12 989.51,237.64" fill="#c1a622"/>
<polygon points="989.63,225.94 990.03,223.43 990.03,232.61 989.63,235.12" fill="#bea422"/>
<polygon points="990.03,223.43 990.70,220.93 990.70,230.11 990.03,232.61" fill="#baa121"/>
<polygon points="990.70,220.93 991.65,218.47 991.65,227.65 990.70,230.11" fill="#b79e20"/>
<polygon points="991.65,218.47 992.86,216.04 992.86,225.22 991.65,227.65" fill="#b29a1f"/>
<polygon points="992.86,216.04 994.34,213.66 994.34,222.84 992.86,225.22" fill="#ad961f"/>
<polygon points="994.34,213.66 996.07,211.34 996.07,220.52 994.34,222.84" fill="#a8911e"/>
<polygon points="996.07,211.34 998.05,209.09 998.05,218.27 996.07,220.52" fill="#a28c1d"/>
<polygon points="998.05,209.09 1000.28,206.91 1000.28,216.09 998.05,218.27" fill="#9c871c"/>
<polygon points="1000.28,206.91 1002.74,204.82 1002.74,214.00 1000.28,216.09" fill="#95811a"/>
<polygon points="1002.74,204.82 1005.43,202.82 1005.43,212.00 1002.74,214.00" fill="#8e7b19"/>
<polygon points="1005.43,202.82 1008.32,200.92 1008.32,210.10 1005.43,212.00" fill="#877418"/>
<polygon points="1008.32,200.92 1011.43,199.13 1011.43,208.31 1008.32,210.10" fill="#7f6e16"/>
<polygon points="1011.43,199.13 1014.72,197.46 1014.72,206.64 1011.43,208.31" fill="#776715"/>
<polygon points="1014.72,197.46 1018.18,195.90 1018.18,205.08 1014.72,206.64" fill="#6e5f14"/>
<polygon points="1018.18,195.90 1021.81,194.48 1021.81,203.66 1018.18,205.08" fill="#665812"/>
<polygon points="1021.81,194.48 1025.59,193.18 1025.59,202.36 1021.81,203.66" fill="#5d5010"/>
<polygon points="1025.59,193.18 1029.51,192.03 1029.51,201.21 1025.59,202.36" fill="#54490f"/>
<polygon points="1029.51,192.03 1033.54,191.02 1033.54,200.20 1029.51,201.21" fill="#4b410d"/>
<polygon points="1033.54,191.02 1037.68,190.16 1037.68,199.34 1033.54,200.20" fill="#42390c"/>
<polygon points="1037.68,190.16 1041.90,189.44 1041.90,198.62 1037.68,199.34" fill="#39310a"/>
<polygon points="1041.90,189.44 1046.19,188.89 1046.19,198.07 1041.90,198.62" fill="#342d09"/>
<polygon points="1046.19,188.89 1050.53,188.48 1050.53,197.66 1046.19,198.07" fill="#3e350b"/>
<polygon points="1050.53,188.48 1054.91,188.24 1054.91,197.42 1050.53,197.66" fill="#473d0d"/>
<polygon points="1054.91,188.24 1059.31,188.15 1059.31,197.33 1054.91,197.42" fill="#50450e"/>
<polygon points="1059.31,188.15 1063.71,188.22 1063.71,197.40 1059.31,197.33" fill="#594d10"/>
<polygon points="1063.71,188.22 1068.09,188.45 1068.09,197.63 1063.71,197.40" fill="#625511"/>
<polygon points="1068.09,188.45 1072.44,188.83 1072.44,198.01 1068.09,197.63" fill="#6b5c13"/>
<polygon points="1072.44,188.83 1076.74,189.37 1076.74,198.55 1072.44,198.01" fill="#736314"/>
<polygon points="1076.74,189.37 1080.97,190.07 1080.97,199.25 1076.74,198.55" fill="#7b6b16"/>
<polygon points="1080.97,190.07 1085.11,190.92 1085.11,200.10 1080.97,199.25" fill="#837117"/>
<polygon points="1085.11,190.92 1089.16,191.91 1089.16,201.09 1085.11,200.10" fill="#8b7819"/>
<polygon points="1089.16,191.91 1093.08,193.05 1093.08,202.23 1089.16,201.09" fill="#927e1a"/>
<polygon points="1093.08,193.05 1096.88,194.33 1096.88,203.51 1093.08,202.23" fill="#99841b"/>
<polygon points="1096.88,194.33 1100.53,195.74 1100.53,204.92 1096.88,203.51" fill="#9f8a1c"/>
<polygon points="1100.53,195.74 1104.01,197.28 1104.01,206.46 1100.53,204.92" fill="#a58f1d"/>
<polygon points="1104.01,197.28 1107.32,198.94 1107.32,208.12 1104.01,206.46" fill="#ab941e"/>
<polygon points="1107.32,198.94 1110.45,200.72 1110.45,209.90 1107.32,208.12" fill="#b0981f"/>
<polygon points="1110.45,200.72 1113.37,202.61 1113.37,211.79 1110.45,209.90" fill="#b59c20"/>
<polygon points="1113.37,202.61 1116.08,204.59 1116.08,213.78 1113.37,211.79" fill="#b9a021"/>
<polygon points="1116.08,204.59 1118.56,206.68 1118.56,215.86 1116.08,213.78" fill="#bca321"/>
<polygon points="1118.56,206.68 1120.82,208.85 1120.82,218.03 1118.56,215.86" fill="#bfa522"/>
<polygon points="1120.82,208.85 1122.83,211.09 1122.83,220.27 1120.82,218.03" fill="#c2a722"/>
<polygon points="1122.83,211.09 1124.59,213.40 1124.59,222.58 1122.83,220.27" fill="#c4a923"/>
<polygon points="1124.59,213.40 1126.09,215.77 1126.09,224.96 1124.59,222.58" fill="#c5aa23"/>
<polygon points="1126.09,215.77 1127.34,218.20 1127.34,227.38 1126.09,224.96" fill="#c6ab23"/>
<polygon points="1127.34,218.20 1128.31,220.66 1128.31,229.84 1127.34,227.38" fill="#c6ab23"/>
<polygon points="1128.31,220.66 1129.01,223.15 1129.01,232.33 1128.31,229.84" fill="#c5aa23"/>
<polygon points="1129.01,223.15 1129.44,225.66 1129.44,234.84 1129.01,232.33" fill="#c4aa23"/>
<polygon points="1129.44,225.66 1129.60,228.18 1129.60,237.36 1129.44,234.84" fill="#c3a822"/>
<polygon points="953.56,105.36 953.68,102.84 953.68,112.02 953.56,114.55" fill="#c1a622"/>
<polygon points="953.68,102.84 954.08,100.33 954.08,109.51 953.68,112.02" fill="#bea422"/>
<polygon points="954.08,100.33 954.76,97.83 954.76,107.01 954.08,109.51" fill="#baa121"/>
<polygon points="954.76,97.83 955.70,95.37 955.70,104.55 954.76,107.01" fill="#b79e20"/>
<polygon points="955.70,95.37 956.91,92.94 956.91,102.12 955.70,104.55" fill="#b29a1f"/>
<polygon points="956.91,92.94 958.39,90.57 958.39,99.75 956.91,102.12" fill="#ad961f"/>
<polygon points="958.39,90.57 960.12,88.25 960.12,97.43 958.39,99.75" fill="#a8911e"/>
<polygon points="960.12,88.25 962.11,85.99 962.11,95.17 960.12,97.43" fill="#a28c1d"/>
<polygon points="962.11,85.99 964.33,83.82 964.33,93.00 962.11,95.17" fill="#9c871c"/>
<polygon points="964.33,83.82 966.79,81.72 966.79,90.90 964.33,93.00" fill="#95811a"/>
<polygon points="966.79,81.72 969.48,79.72 969.48,88.90 966.79,90.90" fill="#8e7b19"/>
<polygon points="969.48,79.72 972.38,77.82 972.38,87.00 969.48,88.90" fill="#877418"/>
<polygon points="972.38,77.82 975.48,76.03 975.48,85.21 972.38,87.00" fill="#7f6e16"/>
<polygon points="975.48,76.03 978.77,74.36 978.77,83.54 975.48,85.21" fill="#776715"/>
<polygon points="978.77,74.36 982.24,72.80 982.24,81.98 978.77,83.54" fill="#6e5f14"/>
<polygon points="982.24,72.80 985.87,71.38 985.87,80.56 982.24,81.98" fill="#665812"/>
<polygon points="985.87,71.38 989.65,70.09 989.65,79.27 985.87,80.56" fill="#5d5010"/>
<polygon points="989.65,70.09 993.56,68.93 993.56,78.11 989.65,79.27" fill="#54490f"/>
<polygon points="993.56,68.93 997.59,67.92 997.59,77.10 993.56,78.11" fill="#4b410d"/>
<polygon points="997.59,67.92 1001.73,67.06 1001.73,76.24 997.59,77.10" fill="#42390c"/>
<polygon points="1001.73,67.06 1005.95,66.35 1005.95,75.53 1001.73,76.24" fill="#39310a"/>
<polygon points="1005.95,66.35 1010.24,65.79 1010.24,74.97 1005.95,75.53" fill="#342d09"/>
<polygon points="1010.24,65.79 1014.58,65.38 1014.58,74.56 1010.24,74.97" fill="#3e350b"/>
<polygon points="1014.58,65.38 1018.96,65.14 1018.96,74.32 1014.58,74.56" fill="#473d0d"/>
<polygon points="1018.96,65.14 1023.36,65.05 1023.36,74.23 1018.96,74.32" fill="#50450e"/>
<polygon points="1023.36,65.05 1027.76,65.12 1027.76,74.30 1023.36,74.23" fill="#594d10"/>
<polygon points="1027.76,65.12 1032.14,65.35 1032.14,74.53 1027.76,74.30" fill="#625511"/>
<polygon points="1032.14,65.35 1036.49,65.73 1036.49,74.91 1032.14,74.53" fill="#6b5c13"/>
<polygon points="1036.49,65.73 1040.79,66.28 1040.79,75.46 1036.49,74.91" fill="#736314"/>
<polygon points="1040.79,66.28 1045.02,66.97 1045.02,76.15 1040.79,75.46" fill="#7b6b16"/>
<polygon points="1045.02,66.97 1049.16,67.82 1049.16,77.00 1045.02,76.15" fill="#837117"/>
<polygon points="1049.16,67.82 1053.21,68.81 1053.21,77.99 1049.16,77.00" fill="#8b7819"/>
<polygon points="1053.21,68.81 1057.14,69.95 1057.14,79.13 1053.21,77.99" fill="#927e1a"/>
<polygon points="1057.14,69.95 1060.93,71.23 1060.93,80.41 1057.14,79.13" fill="#99841b"/>
<polygon points="1060.93,71.23 1064.58,72.64 1064.58,81.82 1060.93,80.41" fill="#9f8a1c"/>
<polygon points="1064.58,72.64 1068.07,74.18 1068.07,83.36 1064.58,81.82" fill="#a58f1d"/>
<polygon points="1068.07,74.18 1071.38,75.84 1071.38,85.02 1068.07,83.36" fill="#ab941e"/>
<polygon points="1071.38,75.84 1074.50,77.62 1074.50,86.80 1071.38,85.02" fill="#b0981f"/>
<polygon points="1074.50,77.62 1077.42,79.51 1077.42,88.69 1074.50,86.80" fill="#b59c20"/>
<polygon points="1077.42,79.51 1080.13,81.50 1080.13,90.68 1077.42,88.69" fill="#b9a021"/>
<polygon points="1080.13,81.50 1082.62,83.58 1082.62,92.76 1080.13,90.68" fill="#bca321"/>
<polygon points="1082.62,83.58 1084.87,85.75 1084.87,94.93 1082.62,92.76" fill="#bfa522"/>
<polygon points="1084.87,85.75 1086.88,87.99 1086.88,97.17 1084.87,94.93" fill="#c2a722"/>
<polygon points="1086.88,87.99 1088.64,90.30 1088.64,99.48 1086.88,97.17" fill="#c4a923"/>
<polygon points="1088.64,90.30 1090.15,92.68 1090.15,101.86 1088.64,99.48" fill="#c5aa23"/>
<polygon points="1090.15,92.68 1091.39,95.10 1091.39,104.28 1090.15,101.86" fill="#c6ab23"/>
<polygon points="1091.39,95.10 1092.36,97.56 1092.36,106.74 1091.39,104.28" fill="#c6ab23"/>
<polygon points="1092.36,97.56 1093.07,100.05 1093.07,109.23 1092.36,106.74" fill="#c5aa23"/>
<polygon points="1093.07,100.05 1093.50,102.56 1093.50,111.74 1093.07,109.23" fill="#c4aa23"/>
<polygon points="1093.50,102.56 1093.65,105.08 1093.65,114.26 1093.50,111.74" fill="#c3a822"/>
<path d="M1058.35,-6.82 L669.14,149.49 L668.58,153.00 L668.04,164.10 L668.72,175.20 L670.61,186.25 L673.70,197.21 L677.90,207.81 L1108.81,323.06 L1125.66,318.10 L1142.29,312.41 L1158.27,306.14 L1173.52,299.30 L1188.00,291.93 L1192.33,289.43 L1150.92,17.94 L1140.47,13.90 L1123.77,8.28 L1106.49,3.27 L1088.70,-1.10 L1070.46,-4.83Z M899.58,185.54 L897.59,187.79 L895.37,189.97 L892.90,192.06 L890.22,194.06 L887.32,195.96 L884.22,197.75 L880.93,199.42 L877.46,200.98 L873.83,202.40 L870.05,203.70 L866.14,204.85 L862.11,205.86 L857.97,206.72 L853.75,207.44 L849.46,207.99 L845.11,208.40 L840.74,208.64 L836.34,208.73 L831.94,208.66 L827.56,208.43 L823.21,208.05 L818.91,207.51 L814.68,206.81 L810.54,205.96 L806.49,204.97 L802.56,203.83 L798.77,202.55 L795.12,201.14 L791.63,199.60 L788.32,197.94 L785.20,196.16 L782.28,194.27 L779.57,192.28 L777.08,190.20 L774.83,188.03 L772.82,185.79 L771.06,183.48 L769.55,181.10 L768.31,178.68 L767.33,176.22 L766.63,173.73 L766.20,171.22 L766.05,168.70 L766.17,166.17 L766.57,163.66 L767.24,161.17 L768.19,158.70 L769.40,156.27 L770.88,153.90 L772.61,151.58 L774.59,149.32 L776.82,147.15 L779.28,145.05 L781.97,143.06 L784.87,141.16 L787.97,139.37 L791.26,137.69 L794.72,136.14 L798.35,134.71 L802.13,133.42 L806.05,132.26 L810.08,131.25 L814.22,130.39 L818.44,129.68 L822.73,129.12 L827.07,128.71 L831.45,128.47 L835.85,128.38 L840.25,128.45 L844.63,128.68 L848.98,129.07 L853.28,129.61 L857.51,130.30 L861.65,131.15 L865.70,132.14 L869.62,133.28 L873.42,134.56 L877.07,135.97 L880.55,137.51 L883.86,139.17 L886.99,140.95 L889.91,142.84 L892.62,144.83 L895.10,146.91 L897.36,149.08 L899.37,151.32 L901.13,153.64 L902.63,156.01 L903.88,158.43 L904.85,160.89 L905.56,163.38 L905.98,165.89 L906.14,168.42 L906.02,170.94 L905.62,173.45 L904.94,175.95 L904.00,178.41 L902.79,180.84 L901.31,183.22Z M1123.04,245.30 L1121.05,247.56 L1118.82,249.73 L1116.36,251.82 L1113.68,253.82 L1110.78,255.72 L1107.68,257.51 L1104.39,259.19 L1100.92,260.74 L1097.29,262.17 L1093.51,263.46 L1089.60,264.62 L1085.57,265.63 L1081.43,266.49 L1077.21,267.20 L1072.92,267.76 L1068.57,268.17 L1064.19,268.41 L1059.80,268.50 L1055.40,268.43 L1051.02,268.20 L1046.67,267.81 L1042.37,267.27 L1038.14,266.58 L1033.99,265.73 L1029.95,264.74 L1026.02,263.60 L1022.23,262.32 L1018.58,260.91 L1015.09,259.37 L1011.78,257.71 L1008.66,255.93 L1005.74,254.04 L1003.03,252.05 L1000.54,249.97 L998.29,247.80 L996.28,245.56 L994.52,243.24 L993.01,240.87 L991.77,238.45 L990.79,235.99 L990.09,233.50 L989.66,230.99 L989.51,228.46 L989.63,225.94 L990.03,223.43 L990.70,220.93 L991.65,218.47 L992.86,216.04 L994.34,213.66 L996.07,211.34 L998.05,209.09 L1000.28,206.91 L1002.74,204.82 L1005.43,202.82 L1008.32,200.92 L1011.43,199.13 L1014.72,197.46 L1018.18,195.90 L1021.81,194.48 L1025.59,193.18 L1029.51,192.03 L1033.54,191.02 L1037.68,190.16 L1041.90,189.44 L1046.19,188.89 L1050.53,188.48 L1054.91,188.24 L1059.31,188.15 L1063.71,188.22 L1068.09,188.45 L1072.44,188.83 L1076.74,189.37 L1080.97,190.07 L1085.11,190.92 L1089.16,191.91 L1093.08,193.05 L1096.88,194.33 L1100.53,195.74 L1104.01,197.28 L1107.32,198.94 L1110.45,200.72 L1113.37,202.61 L1116.08,204.59 L1118.56,206.68 L1120.82,208.85 L1122.83,211.09 L1124.59,213.40 L1126.09,215.77 L1127.34,218.20 L1128.31,220.66 L1129.01,223.15 L1129.44,225.66 L1129.60,228.18 L1129.47,230.71 L1129.08,233.22 L1128.40,235.71 L1127.46,238.18 L1126.25,240.61 L1124.77,242.98Z M1087.09,122.20 L1085.10,124.46 L1082.88,126.63 L1080.42,128.73 L1077.73,130.73 L1074.83,132.62 L1071.73,134.42 L1068.44,136.09 L1064.97,137.65 L1061.34,139.07 L1057.56,140.36 L1053.65,141.52 L1049.62,142.53 L1045.48,143.39 L1041.26,144.10 L1036.97,144.66 L1032.63,145.07 L1028.25,145.31 L1023.85,145.40 L1019.45,145.33 L1015.07,145.10 L1010.72,144.72 L1006.42,144.17 L1002.19,143.48 L998.05,142.63 L994.00,141.64 L990.08,140.50 L986.28,139.22 L982.63,137.81 L979.15,136.27 L975.83,134.61 L972.71,132.83 L969.79,130.94 L967.08,128.95 L964.60,126.87 L962.34,124.70 L960.33,122.46 L958.57,120.14 L957.06,117.77 L955.82,115.35 L954.85,112.89 L954.14,110.40 L953.71,107.89 L953.56,105.36 L953.68,102.84 L954.08,100.33 L954.76,97.83 L955.70,95.37 L956.91,92.94 L958.39,90.57 L960.12,88.25 L962.11,85.99 L964.33,83.82 L966.79,81.72 L969.48,79.72 L972.38,77.82 L975.48,76.03 L978.77,74.36 L982.24,72.80 L985.87,71.38 L989.65,70.09 L993.56,68.93 L997.59,67.92 L1001.73,67.06 L1005.95,66.35 L1010.24,65.79 L1014.58,65.38 L1018.96,65.14 L1023.36,65.05 L1027.76,65.12 L1032.14,65.35 L1036.49,65.73 L1040.79,66.28 L1045.02,66.97 L1049.16,67.82 L1053.21,68.81 L1057.14,69.95 L1060.93,71.23 L1064.58,72.64 L1068.07,74.18 L1071.38,75.84 L1074.50,77.62 L1077.42,79.51 L1080.13,81.50 L1082.62,83.58 L1084.87,85.75 L1086.88,87.99 L1088.64,90.30 L1090.15,92.68 L1091.39,95.10 L1092.36,97.56 L1093.07,100.05 L1093.50,102.56 L1093.65,105.08 L1093.53,107.61 L1093.13,110.12 L1092.46,112.62 L1091.51,115.08 L1090.30,117.51 L1088.82,119.88Z" fill="#f9d72c" fill-rule="evenodd"/>
</g>
<g stroke="#000" stroke-width="1" fill="none" shape-rendering="crispEdges">
<line x1="976.24" y1="163.48" x2="976.24" y2="-696.27"/>
<line x1="976.24" y1="126.76" x2="961.22" y2="122.74"/>
<line x1="976.24" y1="80.86" x2="961.22" y2="76.84"/>
<polyline points="980.81,74.74 980.81,67.62 988.43,69.66 988.43,76.78 996.05,78.81 996.05,71.70"/>
<polyline points="980.81,78.64 980.81,85.75 996.05,89.83 996.05,82.71 980.81,78.64"/>
<line x1="976.24" y1="34.96" x2="961.22" y2="30.94"/>
<line x1="976.24" y1="-10.94" x2="961.22" y2="-14.96"/>
<polyline points="996.05,-20.11 988.43,-22.14 988.43,-15.03"/>
<polyline points="996.05,-12.99 980.81,-17.07"/>
<polyline points="980.81,-13.16 980.81,-6.05 996.05,-1.98 996.05,-9.09 980.81,-13.16"/>
<line x1="976.24" y1="-56.85" x2="961.22" y2="-60.86"/>
<line x1="976.24" y1="-102.75" x2="961.22" y2="-106.77"/>
<polyline points="996.05,-104.80 996.05,-111.91 980.81,-115.99 980.81,-108.87 988.43,-106.83 988.43,-113.95"/>
<polyline points="980.81,-104.97 980.81,-97.85 996.05,-93.78 996.05,-100.89 980.81,-104.97"/>
<line x1="976.24" y1="-148.65" x2="961.22" y2="-152.67"/>
<line x1="976.24" y1="-194.55" x2="961.22" y2="-198.57"/>
<polyline points="980.81,-207.79 980.81,-200.68 996.05,-196.60 996.05,-203.72 980.81,-207.79"/>
<polyline points="988.43,-205.75 988.43,-198.64"/>
<polyline points="980.81,-196.77 980.81,-189.66 996.05,-185.58 996.05,-192.70 980.81,-196.77"/>
<line x1="976.24" y1="-240.46" x2="961.22" y2="-244.47"/>
<line x1="976.24" y1="-286.36" x2="946.20" y2="-294.39"/>
<polyline points="980.81,-299.60 996.05,-295.52"/>
<polyline points="980.81,-288.58 980.81,-281.46 996.05,-277.39 996.05,-284.50 980.81,-288.58"/>
<polyline points="980.81,-277.56 980.81,-270.45 996.05,-266.37 996.05,-273.49 980.81,-277.56"/>
<line x1="976.24" y1="-332.26" x2="961.22" y2="-336.28"/>
<line x1="976.24" y1="-378.16" x2="961.22" y2="-382.18"/>
<polyline points="980.81,-391.40 996.05,-387.32"/>
<polyline points="980.81,-373.27 980.81,-380.38 988.43,-378.35 988.43,-371.23 996.05,-369.19 996.05,-376.31"/>
<polyline points="980.81,-369.37 980.81,-362.25 996.05,-358.18 996.05,-365.29 980.81,-369.37"/>
<line x1="976.24" y1="-424.07" x2="961.22" y2="-428.08"/>
<line x1="976.24" y1="-469.97" x2="961.22" y2="-473.99"/>
<polyline points="980.81,-483.20 996.05,-479.13"/>
<polyline points="996.05,-468.11 988.43,-470.15 988.43,-463.04"/>
<polyline points="996.05,-461.00 980.81,-465.07"/>
<polyline points="980.81,-461.17 980.81,-454.06 996.05,-449.98 996.05,-457.10 980.81,-461.17"/>
<line x1="976.24" y1="-515.87" x2="961.22" y2="-519.89"/>
<line x1="976.24" y1="-561.77" x2="961.22" y2="-565.79"/>
<polyline points="980.81,-575.01 996.05,-570.93"/>
<polyline points="996.05,-552.80 996.05,-559.92 980.81,-563.99 980.81,-556.88 988.43,-554.84 988.43,-561.96"/>
<polyline points="980.81,-552.98 980.81,-545.86 996.05,-541.79 996.05,-548.90 980.81,-552.98"/>
<line x1="976.24" y1="-607.67" x2="961.22" y2="-611.69"/>
</g>
<g stroke-width="1" shape-rendering="crispEdges" fill="none">
<line x1="192.0" y1="380.0" x2="212.5" y2="385.5" stroke="#ff0000" stroke-width="1.2"/>
<line x1="192.0" y1="380.0" x2="201.5" y2="368.3" stroke="#00ff00"/>
<line x1="191.5" y1="380.0" x2="191.5" y2="361.5" stroke="#0000ff"/>
</g>
<g stroke="#000" stroke-width="1" fill="none">
<path d="M188.8 354.20000000000005 H194.8 L188.8 360.70000000000005 H194.8"/>
<path d="M201.2 361.79999999999995 L204.2 364.79999999999995 M206.89999999999998 361.79999999999995 L202.7 367.59999999999997"/>
<path d="M213.8 384.20000000000005 L219.8 389.90000000000003 M219.8 384.20000000000005 L213.8 389.90000000000003"/>
</g>
</svg><svg class="a" style="left:0;top:979px" width="600" height="38" viewBox="0 979 600 38">
<g transform="translate(-245.1 867.8)">
<g fill="none" stroke="#222" stroke-width="1.4" stroke-dasharray="0 2.1" stroke-linecap="round">
 <path d="M264.9 121.5 L272.7 125.8 V134.5 L269 136.6 M260.8 136.6 L257.1 134.5 V125.8 L264.9 121.5"/>
 <path d="M257.1 125.8 L264.9 130 L272.7 125.8 M264.9 130 V134"/>
</g>
<path d="M261.5 135 L263.5 137.5 L261.5 140 M265.5 135 L267.5 137.5 L265.5 140" fill="none" stroke="#000" stroke-width="1.6"/>
</g>
<g transform="translate(-245.3 868)">
<g fill="none" stroke="#222" stroke-width="1.3" stroke-linejoin="round">
 <path d="M300 137.7 L305.4 134.5 V125.8 L297.8 121.3 L290.3 125.8 V134.5 L295.6 137.7"/>
 <path d="M290.3 125.8 L297.8 129.8 L305.4 125.8"/>
</g>
<path d="M295.2 131 H300.4 L298.6 134 V136 L300.6 138.6 H295 L297 136 V134 Z" fill="#555"/>
<path d="M295 139.3 H300.6" stroke="#222" stroke-width="1"/>
</g>
<path d="M73.5 989 V1007.5" stroke="#d2d2d2"/><path d="M74.5 989 V1007.5" stroke="#fafafa"/>
<path d="M83.3 991 V988.6 H86.3 M95.8 988.6 H98.6 V991 M83.3 1000.5 V1003.3 H86.3" fill="none" stroke="#000" stroke-width="1.6"/>
<circle cx="90.9" cy="995.9" r="5.6" fill="none" stroke="#111" stroke-width="1.3"/>
<path d="M93.8 1001.2 L97.4 1006.5" stroke="#000" stroke-width="2.8" stroke-linecap="round"/>
<path d="M98.6 1000.5 V1004" stroke="#000" stroke-width="1.6"/>
<circle cx="123.7" cy="995.9" r="5.9" fill="none" stroke="#111" stroke-width="1.3"/>
<path d="M120.5 995.9 H126.9 M123.7 992.7 V999.1" stroke="#333" stroke-width="1.4"/>
<path d="M126.5 1001.4 L130 1006.5" stroke="#000" stroke-width="2.8" stroke-linecap="round"/>
<circle cx="156.9" cy="995.9" r="5.9" fill="none" stroke="#111" stroke-width="1.3"/>
<path d="M153.6 995.9 H160.2" stroke="#333" stroke-width="1.6"/>
<path d="M159.7 1001.4 L163.2 1006.5" stroke="#000" stroke-width="2.8" stroke-linecap="round"/>
<path d="M186.6 993.2 A7.4 7.4 0 1 1 185.8 1001.2" fill="none" stroke="#111" stroke-width="1.3"/>
<path d="M184.8 991.6 L189.4 993.2 L185.4 995.3 Z" fill="#000"/>
<path d="M213.5 989 V1007.5" stroke="#d2d2d2"/><path d="M214.5 989 V1007.5" stroke="#fafafa"/>
<g id="star">
<path d="M230.3 991 V1002.7 M224.3 995.5 Q227 996.7 230.3 996.9 L236.5 995 M227.2 999.6 L233.2 994.4" fill="none" stroke="#111" stroke-width="1.1"/>
</g>
<ellipse cx="238.6" cy="996.5" rx="4.2" ry="2" fill="#000"/><circle cx="238.6" cy="996.5" r="1.2" fill="#fff"/>
<text x="234.6" y="1008.4" font-family="Liberation Sans" font-size="11.5" fill="#111" textLength="8.6" lengthAdjust="spacingAndGlyphs">+X</text>
<use href="#star" transform="translate(32.9 0)"/>
<ellipse cx="257.6" cy="993.8" rx="4.2" ry="2" fill="#000"/><circle cx="257.6" cy="993.8" r="1.2" fill="#fff"/>
<text x="267.8" y="1008.4" font-family="Liberation Sans" font-size="11.5" fill="#111" textLength="8.6" lengthAdjust="spacingAndGlyphs">-X</text>
<use href="#star" transform="translate(66 0)"/>
<ellipse cx="302.5" cy="991.8" rx="4.2" ry="2" fill="#000"/><circle cx="302.5" cy="991.8" r="1.2" fill="#fff"/>
<text x="300.8" y="1008.4" font-family="Liberation Sans" font-size="11.5" fill="#111" textLength="8.6" lengthAdjust="spacingAndGlyphs">+Y</text>
<use href="#star" transform="translate(99.3 0)"/>
<ellipse cx="323.8" cy="1000" rx="4.2" ry="2" fill="#000"/><circle cx="323.8" cy="1000" r="1.2" fill="#fff"/>
<text x="332.5" y="1008.4" font-family="Liberation Sans" font-size="11.5" fill="#111" textLength="8.6" lengthAdjust="spacingAndGlyphs">-Y</text>
<use href="#star" transform="translate(135 0)"/>
<ellipse cx="365.2" cy="990.3" rx="4.2" ry="2" fill="#000"/><circle cx="365.2" cy="990.3" r="1.2" fill="#fff"/>
<path d="M365.2 992 V996" stroke="#111" stroke-width="1"/>
<text x="366.5" y="1008.4" font-family="Liberation Sans" font-size="11.5" fill="#111" textLength="8.6" lengthAdjust="spacingAndGlyphs">+Z</text>
<use href="#star" transform="translate(168 0)"/>
<path d="M398.3 1002 V1004.5" stroke="#111" stroke-width="1"/>
<ellipse cx="398.3" cy="1005.7" rx="4.2" ry="2" fill="#000"/><circle cx="398.3" cy="1005.7" r="1.2" fill="#fff"/>
<text x="400.5" y="1008.4" font-family="Liberation Sans" font-size="11.5" fill="#111" textLength="8.6" lengthAdjust="spacingAndGlyphs">-Z</text>
<path d="M417.5 989 V1007.5" stroke="#d2d2d2"/><path d="M418.5 989 V1007.5" stroke="#fafafa"/>
<g fill="none" stroke="#111" stroke-width="1.3" stroke-linejoin="round">
 <path d="M427.8 998.6 L446.3 988.5 L437.5 1006.8 H427.8 Z M427.8 998.6 H437.5 V1006.8 M437.5 998.6 L446.3 988.5"/>
</g>
<rect x="454.3" y="983.4" width="31.4" height="30.2" rx="3" fill="#dcdcdc" stroke="#bdbdbd" stroke-width="1"/>
<g fill="none" stroke="#111" stroke-width="1.3" stroke-linejoin="round">
 <path d="M461.5 992 L465.5 988.5 H478.5 V1003 L474.5 1006.8 H461.5 Z M461.5 992 H474.5 V1006.8 M474.5 992 L478.5 988.5"/>
 <path d="M465.5 988.5 V1003 H478.5 M465.5 1003 L461.5 1006.8" stroke="#444" stroke-width="1"/>
</g>
<path d="M490.5 989 V1007.5" stroke="#d2d2d2"/><path d="M491.5 989 V1007.5" stroke="#fafafa"/>
<rect x="494.4" y="983.4" width="30.8" height="30.2" rx="3" fill="#dcdcdc" stroke="#bdbdbd" stroke-width="1"/>
<path d="M510.2 989.3 V997.6 M511.8 997.8 H518.8" stroke="#222" stroke-width="1.6"/>
<path d="M510 997.8 L504 1003.8" stroke="#222" stroke-width="1"/>
<rect x="527.8" y="983.4" width="30.8" height="30.2" rx="3" fill="#dcdcdc" stroke="#bdbdbd" stroke-width="1"/>
<path d="M543.4 989.3 V997.6" stroke="#222" stroke-width="1.6" stroke-dasharray="0.8 0.6"/>
<path d="M545 997.2 H551.8" stroke="#222" stroke-width="1.6" stroke-dasharray="0.8 0.6"/>
<path d="M543.2 997.8 L537.5 1003.5" stroke="#222" stroke-width="1" stroke-dasharray="1.2 0.8"/>
<text x="544.6" y="1006.4" font-family="Liberation Sans" font-size="8.8" fill="#111" letter-spacing="-0.4">10</text>
<g stroke="#333" stroke-width="1.2">
<path d="M572 992.3 H580 M572 1003.3 H580 M568.2 995 V1001 M583.7 995 V1001"/>
</g>
<g fill="#000"><rect x="567.3" y="991.6" width="1.8" height="1.8"/><rect x="582.7" y="991.6" width="1.8" height="1.8"/><rect x="567.3" y="1002.6" width="1.8" height="1.8"/><rect x="582.7" y="1002.6" width="1.8" height="1.8"/></g>
</svg>
<div class="a ui" style="left:2.1px;top:1022.9px;letter-spacing:0.367px">Ansicht: Verschiebung = [ -0.61 -5.55 -5.01 ], Rotation = [ 55.00 0.00 25.00 ], Abstand = 189.30, Sichtfeld = 22.50 (1920x422)</div>
<div class="a ui" style="left:1604.6px;top:1022.9px;letter-spacing:0.209px">OpenSCAD 2023.03.30.ai14341 (git 8a07b27b7)</div>
<svg class="a" style="left:1905px;top:1026px" width="15" height="14"><g fill="#c4c4c4"><rect x="11" y="2" width="1" height="1"/><rect x="8" y="5" width="1" height="1"/><rect x="11" y="5" width="1" height="1"/><rect x="5" y="8" width="1" height="1"/><rect x="8" y="8" width="1" height="1"/><rect x="11" y="8" width="1" height="1"/><rect x="2" y="11" width="1" height="1"/><rect x="5" y="11" width="1" height="1"/><rect x="8" y="11" width="1" height="1"/><rect x="11" y="11" width="1" height="1"/></g></svg>
</body></html>
